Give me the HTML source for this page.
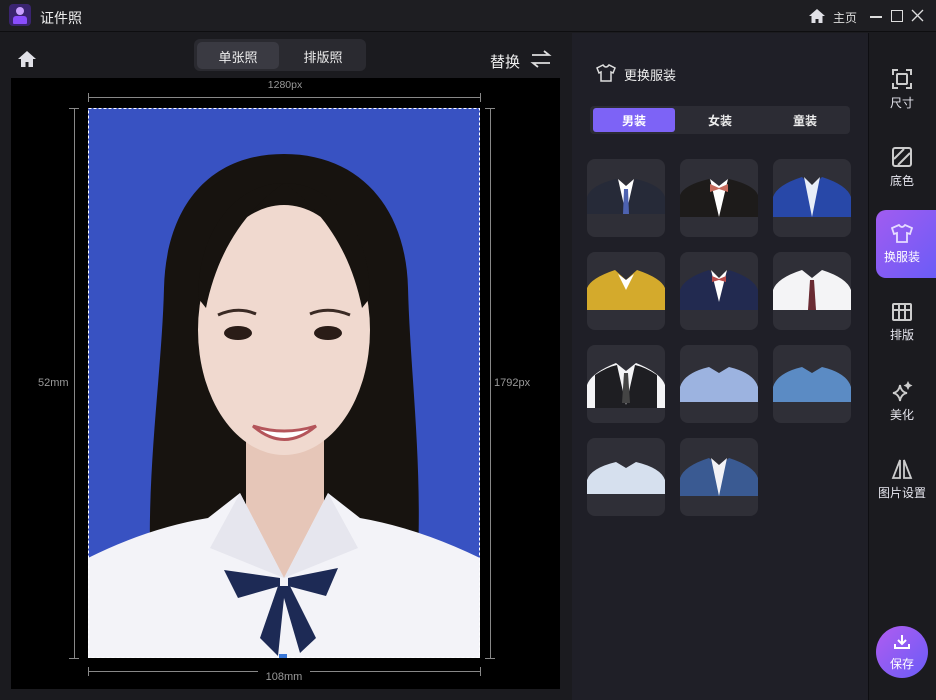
<!DOCTYPE html>
<html><head><meta charset="utf-8"><style>
*{margin:0;padding:0;box-sizing:border-box}
body{width:936px;height:700px;overflow:hidden;background:#1b1b1f;font-family:"Liberation Sans","Noto Sans CJK SC",sans-serif;color:#e8e8ee;position:relative}
.abs{position:absolute}
.card{position:absolute;width:78px;height:78px;border-radius:8px;background:#2f2f37;overflow:hidden}
.card svg{position:absolute;left:0;top:0}
.nav{position:absolute;left:868px;width:68px;text-align:center;font-size:12px;color:#e6e6ee}
.nav svg{display:block;margin:0 auto 4px}
</style></head><body>
<div class="abs" style="left:0;top:0;width:936px;height:32px;background:#1e1e22;border-bottom:1px solid #0e0e10"></div>
<div class="abs" style="left:9px;top:4px;width:22px;height:22px;border-radius:4px;background:#3a2470"></div>
<div class="abs" style="left:16px;top:7px;width:8px;height:8px;border-radius:50%;background:#c9a0ff"></div>
<div class="abs" style="left:13px;top:16px;width:14px;height:8px;border-radius:3px 3px 1px 1px;background:#8a4dff"></div>
<div class="abs" style="left:40px;top:8px;font-size:14px;color:#eee">证件照</div>
<svg class="abs" style="left:808px;top:8px" width="18" height="16" viewBox="0 0 18 16"><path d="M9 1L1 8h2.5v7h4v-4h3v4h4V8H17z" fill="#e0e0e6"/></svg>
<div class="abs" style="left:833px;top:9px;font-size:12px;color:#ddd">主页</div>
<div class="abs" style="left:870px;top:16px;width:12px;height:1.5px;background:#ddd"></div>
<div class="abs" style="left:891px;top:10px;width:12px;height:12px;border:1.5px solid #ddd"></div>
<svg class="abs" style="left:911px;top:9px" width="13" height="13"><path d="M1 1L12 12M12 1L1 12" stroke="#ddd" stroke-width="1.3"/></svg>

<svg class="abs" style="left:17px;top:50px" width="20" height="18" viewBox="0 0 20 18"><path d="M10 1L1 9h3v8h4.5v-5h3v5H16V9h3z" fill="#e0e0e6"/></svg>
<div class="abs" style="left:194px;top:39px;width:172px;height:32px;border-radius:6px;background:#2a2a30"></div>
<div class="abs" style="left:197px;top:42px;width:82px;height:27px;border-radius:5px;background:#3a3a42"></div>
<div class="abs" style="left:197px;top:47px;width:82px;text-align:center;font-size:13px;color:#eee">单张照</div>
<div class="abs" style="left:282px;top:47px;width:82px;text-align:center;font-size:13px;color:#eee">排版照</div>
<div class="abs" style="left:490px;top:51px;font-size:15px;color:#eee">替换</div>
<svg class="abs" style="left:530px;top:49px" width="22" height="20"><path d="M2 6h17l-5-4M20 14H3l5 4" stroke="#ddd" stroke-width="1.8" fill="none"/></svg>

<div class="abs" style="left:11px;top:78px;width:549px;height:611px;background:#000"></div>
<div class="abs" style="left:88px;top:97px;width:393px;height:1px;background:#888"></div>
<div class="abs" style="left:88px;top:93px;width:1px;height:9px;background:#888"></div>
<div class="abs" style="left:480px;top:93px;width:1px;height:9px;background:#888"></div>
<div class="abs" style="left:240px;top:79px;width:90px;text-align:center;font-size:10.5px;color:#999">1280px</div>
<div class="abs" style="left:74px;top:108px;width:1px;height:551px;background:#888"></div>
<div class="abs" style="left:69px;top:108px;width:10px;height:1px;background:#888"></div>
<div class="abs" style="left:69px;top:658px;width:10px;height:1px;background:#888"></div>
<div class="abs" style="left:38px;top:377px;font-size:11px;color:#999;background:#000">52mm</div>
<div class="abs" style="left:490px;top:108px;width:1px;height:551px;background:#888"></div>
<div class="abs" style="left:485px;top:108px;width:10px;height:1px;background:#888"></div>
<div class="abs" style="left:485px;top:658px;width:10px;height:1px;background:#888"></div>
<div class="abs" style="left:494px;top:377px;font-size:11px;color:#999;background:#000">1792px</div>
<div class="abs" style="left:88px;top:671px;width:393px;height:1px;background:#888"></div>
<div class="abs" style="left:88px;top:667px;width:1px;height:9px;background:#888"></div>
<div class="abs" style="left:480px;top:667px;width:1px;height:9px;background:#888"></div>
<div class="abs" style="left:258px;top:671px;width:52px;text-align:center;font-size:11px;color:#999;background:#000">108mm</div>

<svg class="abs" style="left:88px;top:108px" width="392" height="550" viewBox="0 0 392 550">
<rect width="392" height="550" fill="#3852c2"/>
<path d="M196 46C120 46 78 100 76 180C74 260 60 350 62 447L330 447C334 350 322 260 320 180C318 100 272 46 196 46Z" fill="#17130f"/>
<rect x="158" y="300" width="78" height="180" fill="#e6c6b8"/>
<ellipse cx="196" cy="222" rx="86" ry="125" fill="#f0d9cf"/>
<path d="M110 190C110 120 150 75 196 75C160 100 130 140 118 200Z" fill="#17130f"/>
<path d="M282 190C282 120 244 75 196 75C232 100 262 140 274 200Z" fill="#17130f"/>
<ellipse cx="150" cy="225" rx="14" ry="7" fill="#2a1c17"/>
<ellipse cx="240" cy="225" rx="14" ry="7" fill="#2a1c17"/>
<path d="M130 207Q150 198 168 206M222 206Q240 198 262 207" stroke="#3a2a24" stroke-width="3" fill="none"/>
<path d="M165 318Q196 345 228 318Q196 328 165 318Z" fill="#fff" stroke="#b4555a" stroke-width="3"/>
<path d="M0 450Q60 420 120 410L152 385L196 470L240 385L272 410Q330 420 392 450L392 550L0 550Z" fill="#f3f3f8"/>
<path d="M152 385L122 440L196 470ZM240 385L270 440L196 470Z" fill="#e6e6ee"/>
<path d="M192 470L136 462L150 490L192 478ZM200 470L250 460L238 488L200 478Z" fill="#1d2a55"/>
<path d="M190 478L172 530L190 548L196 490L212 545L228 530L202 478Z" fill="#1d2a55"/>
<rect x="0.5" y="0.5" width="391" height="549" fill="none" stroke="#fff" stroke-dasharray="3 2"/>
<rect x="191" y="546" width="8" height="4" fill="#3b78d8"/>
</svg>

<div class="abs" style="left:572px;top:33px;width:296px;height:667px;background:#1f1f27"></div>
<div class="abs" style="left:868px;top:33px;width:1px;height:667px;background:#0e0e12"></div>
<svg class="abs" style="left:596px;top:64px" width="20" height="18" viewBox="0 0 20 18"><path d="M7 1L1 4l2 5 2-1v9h10V8l2 1 2-5-6-3Q10 5 7 1Z" fill="none" stroke="#ddd" stroke-width="1.5"/></svg>
<div class="abs" style="left:624px;top:65px;font-size:13px;color:#eee">更换服装</div>
<div class="abs" style="left:590px;top:106px;width:260px;height:28px;border-radius:4px;background:#2c2c34"></div>
<div class="abs" style="left:593px;top:108px;width:82px;height:24px;border-radius:3px;background:#7d63f6"></div>
<div class="abs" style="left:593px;top:112px;width:82px;text-align:center;font-size:12px;font-weight:bold;color:#fff">男装</div>
<div class="abs" style="left:679px;top:112px;width:82px;text-align:center;font-size:12px;font-weight:bold;color:#eee">女装</div>
<div class="abs" style="left:764px;top:112px;width:82px;text-align:center;font-size:12px;font-weight:bold;color:#eee">童装</div>

<div class="card" style="left:587px;top:159px"><svg width="78" height="78"><path d="M0 55V38Q4 26 29 20L39 28L49 20Q74 26 78 38V55Z" fill="#262a38"/><path d="M31 20L39 55L47 20L39 27Z" fill="#fff"/><path d="M37 30h4l1 25h-6z" fill="#4d62b0"/></svg></div>
<div class="card" style="left:680px;top:159px"><svg width="78" height="78"><path d="M0 58V36Q4 26 29 20L39 28L49 20Q74 26 78 36V58Z" fill="#1d1b1a"/><path d="M30 20L39 58L48 20L39 27Z" fill="#fff"/><path d="M30 25L39 29L48 25V33L39 30L30 33Z" fill="#c56a5c"/></svg></div>
<div class="card" style="left:773px;top:159px"><svg width="78" height="78"><path d="M0 58V38Q4 26 29 18L39 28L49 18Q74 26 78 38V58Z" fill="#2848a8"/><path d="M31 18L39 58L47 18L39 26Z" fill="#e8eef8"/></svg></div>
<div class="card" style="left:587px;top:252px"><svg width="78" height="78"><path d="M0 58V36Q4 26 28 18L39 28L50 18Q74 26 78 36V58Z" fill="#d4aa2c"/><path d="M31 22L39 38L47 22L39 28Z" fill="#fff"/></svg></div>
<div class="card" style="left:680px;top:252px"><svg width="78" height="78"><path d="M0 58V38Q4 26 29 18L39 28L49 18Q74 26 78 38V58Z" fill="#222a50"/><path d="M31 18L39 50L47 18L39 26Z" fill="#fff"/><path d="M32 24L39 27L46 24V30L39 28L32 30Z" fill="#b84b4b"/></svg></div>
<div class="card" style="left:773px;top:252px"><svg width="78" height="78"><path d="M0 58V38Q4 26 29 18L39 26L49 18Q74 26 78 38V58Z" fill="#f4f4f6"/><path d="M37 28h4l2 30h-8z" fill="#6a2b33"/></svg></div>
<div class="card" style="left:587px;top:345px"><svg width="78" height="78"><path d="M0 63V40Q4 28 29 18L39 26L49 18Q74 28 78 40V63Z" fill="#f4f4f6"/><path d="M8 30Q20 22 30 20L39 60L48 20Q58 22 70 30V63H8Z" fill="#1e1e22"/><path d="M37 28h4l2 30h-8z" fill="#444"/></svg></div>
<div class="card" style="left:680px;top:345px"><svg width="78" height="78"><path d="M0 57V42Q4 28 29 22L39 28L49 22Q74 28 78 42V57Z" fill="#9cb3e0"/></svg></div>
<div class="card" style="left:773px;top:345px"><svg width="78" height="78"><path d="M0 57V42Q4 28 29 22L39 28L49 22Q74 28 78 42V57Z" fill="#5b8bc4"/></svg></div>
<div class="card" style="left:587px;top:438px"><svg width="78" height="78"><path d="M0 56V42Q4 30 29 24L39 30L49 24Q74 30 78 42V56Z" fill="#d6e0ee"/></svg></div>
<div class="card" style="left:680px;top:438px"><svg width="78" height="78"><path d="M0 58V40Q4 28 29 20L39 28L49 20Q74 28 78 40V58Z" fill="#3a5a92"/><path d="M31 20L39 58L47 20L39 27Z" fill="#f2f2f6"/></svg></div>

<div class="nav" style="top:68px"><svg width="22" height="22" viewBox="0 0 22 22"><path d="M2 7V2h5M15 2h5v5M20 15v5h-5M7 20H2v-5" stroke="#ccc" stroke-width="2" fill="none"/><rect x="6" y="6" width="10" height="10" rx="1" stroke="#ccc" stroke-width="2" fill="none"/></svg>尺寸</div>
<div class="nav" style="top:146px"><svg width="22" height="22" viewBox="0 0 22 22"><rect x="2" y="2" width="18" height="18" rx="2" stroke="#ccc" stroke-width="2" fill="none"/><path d="M3 13L13 3M7 19L19 7" stroke="#ccc" stroke-width="2"/></svg>底色</div>
<div class="abs" style="left:876px;top:210px;width:60px;height:68px;border-radius:10px 0 0 10px;background:linear-gradient(135deg,#a15cf0,#6b5cf7)"></div>
<div class="nav" style="top:224px;color:#fff"><svg width="22" height="20" viewBox="0 0 22 20"><path d="M8 1L1 4l2 6 3-1v9h10V9l3 1 2-6-7-3Q11 5 8 1Z" fill="none" stroke="#e6dcff" stroke-width="1.8"/></svg>换服装</div>
<div class="nav" style="top:302px"><svg width="22" height="20" viewBox="0 0 22 20"><rect x="2" y="2" width="18" height="16" rx="1" stroke="#ccc" stroke-width="2" fill="none"/><path d="M2 8h18M8 2v16M14 2v16" stroke="#ccc" stroke-width="2"/></svg>排版</div>
<div class="nav" style="top:380px"><svg width="22" height="22" viewBox="0 0 22 22"><path d="M9 5Q10 12 16 13Q10 14 9 21Q8 14 2 13Q8 12 9 5Z" fill="none" stroke="#ccc" stroke-width="1.8"/><path d="M17 1l1.5 3 3 1.5-3 1.5L17 10l-1.5-3-3-1.5 3-1.5Z" fill="#ccc"/></svg>美化</div>
<div class="nav" style="top:458px"><svg width="22" height="22" viewBox="0 0 22 22"><path d="M9 2L2 20h7ZM13 2l7 18h-7Z" fill="none" stroke="#ccc" stroke-width="1.8"/></svg>图片设置</div>
<div class="abs" style="left:876px;top:626px;width:52px;height:52px;border-radius:50%;background:linear-gradient(135deg,#b05cf0,#6a5cf7)"></div>
<svg class="abs" style="left:893px;top:634px" width="18" height="16"><path d="M9 1v9M5 6l4 4 4-4M2 10v4h14v-4" stroke="#fff" stroke-width="2" fill="none"/></svg>
<div class="abs" style="left:876px;top:655px;width:52px;text-align:center;font-size:12px;color:#fff">保存</div>
</body></html>
